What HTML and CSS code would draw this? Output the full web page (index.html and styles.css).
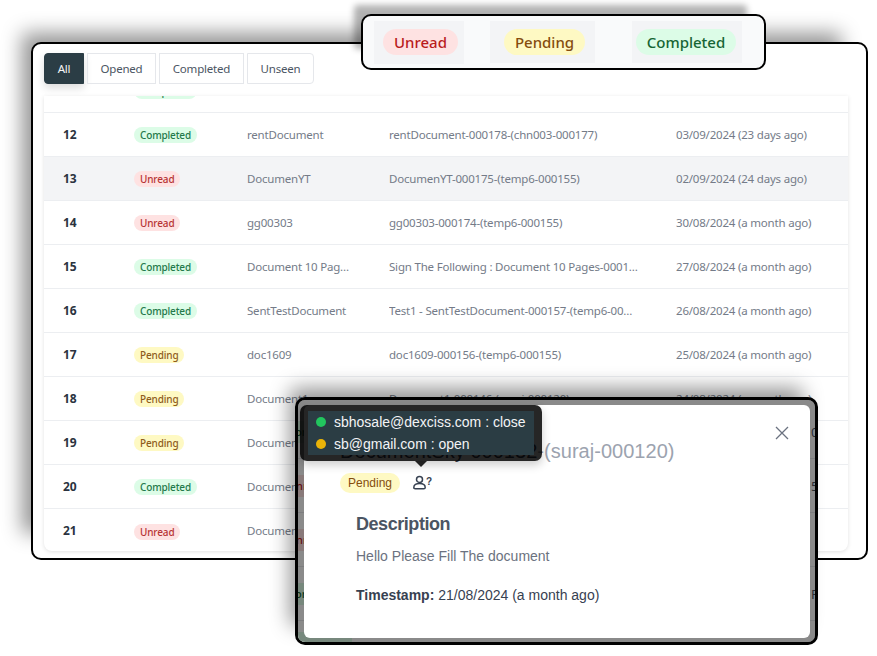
FILE: index.html
```html
<!DOCTYPE html>
<html lang="en">
<head>
<meta charset="utf-8">
<title>Documents</title>
<link rel="stylesheet" href="styles.css">
</head>
<body>
<div class="desktop">
  <section class="window main-window">
    <nav class="tabs">
      <span class="tab tab-active">All</span>
      <span class="tab">Opened</span>
      <span class="tab">Completed</span>
      <span class="tab tab-last">Unseen</span>
    </nav>
    <div class="table">
      <div class="rows">
        <div class="row"><b class="num">11</b><span class="status"><i class="badge completed">Completed</i></span><span class="cell"></span><span class="cell"></span><span class="cell"></span></div>
        <div class="row"><b class="num">12</b><span class="status"><i class="badge completed">Completed</i></span><span class="cell name">rentDocument</span><span class="cell doc">rentDocument-000178-(chn003-000177)</span><span class="cell">03/09/2024 (23 days ago)</span></div>
        <div class="row row-hover"><b class="num">13</b><span class="status"><i class="badge unread">Unread</i></span><span class="cell name">DocumenYT</span><span class="cell doc">DocumenYT-000175-(temp6-000155)</span><span class="cell">02/09/2024 (24 days ago)</span></div>
        <div class="row"><b class="num">14</b><span class="status"><i class="badge unread">Unread</i></span><span class="cell name">gg00303</span><span class="cell doc">gg00303-000174-(temp6-000155)</span><span class="cell">30/08/2024 (a month ago)</span></div>
        <div class="row"><b class="num">15</b><span class="status"><i class="badge completed">Completed</i></span><span class="cell name">Document 10 Pages</span><span class="cell doc">Sign The Following : Document 10 Pages-000170-(temp6-000155)</span><span class="cell">27/08/2024 (a month ago)</span></div>
        <div class="row"><b class="num">16</b><span class="status"><i class="badge completed">Completed</i></span><span class="cell name">SentTestDocument</span><span class="cell doc">Test1 - SentTestDocument-000157-(temp6-000155)</span><span class="cell">26/08/2024 (a month ago)</span></div>
        <div class="row"><b class="num">17</b><span class="status"><i class="badge pending">Pending</i></span><span class="cell name">doc1609</span><span class="cell doc">doc1609-000156-(temp6-000155)</span><span class="cell">25/08/2024 (a month ago)</span></div>
        <div class="row"><b class="num">18</b><span class="status"><i class="badge pending">Pending</i></span><span class="cell name">Document1</span><span class="cell doc">Document1-000146-(suraj-000120)</span><span class="cell">24/08/2024 (a month ago)</span></div>
        <div class="row"><b class="num">19</b><span class="status"><i class="badge pending">Pending</i></span><span class="cell name">Document1</span><span class="cell doc"></span><span class="cell"></span></div>
        <div class="row"><b class="num">20</b><span class="status"><i class="badge completed">Completed</i></span><span class="cell name">Document1</span><span class="cell doc"></span><span class="cell"></span></div>
        <div class="row"><b class="num">21</b><span class="status"><i class="badge unread">Unread</i></span><span class="cell name">Document1</span><span class="cell doc"></span><span class="cell"></span></div>
      </div>
    </div>
  </section>

  <section class="window legend">
    <div class="swatch swatch-unread"><i class="pill unread">Unread</i></div>
    <div class="swatch swatch-pending"><i class="pill pending">Pending</i></div>
    <div class="swatch swatch-completed"><i class="pill completed">Completed</i></div>
  </section>

  <section class="window modal-window">
    <div class="under-rows">
      <div class="under-row"><span class="under-badge completed">Completed</span><span class="under-date">0</span></div>
      <div class="under-row"><span class="under-badge unread">Unread</span><span class="under-date">5</span></div>
      <div class="under-row"><span class="under-badge unread">Unread</span></div>
      <div class="under-row"><span class="under-badge completed">Completed</span><span class="under-date">P</span></div>
      <div class="under-row"><span class="under-badge completed"></span></div>
    </div>
    <div class="scrim"></div>
    <div class="dialog">
      <svg class="close" viewBox="0 0 14 14" width="14" height="14" aria-hidden="true"><path d="M1 1l12 12M13 1L1 13"/></svg>
      <h2 class="title">DocumentSky 000132<span class="title-rest">-(suraj-000120)</span></h2>
      <div class="status-line">
        <span class="status-pill">Pending</span>
        <svg class="person" viewBox="0 0 18 14" width="18" height="14" aria-hidden="true">
          <circle cx="6.500" cy="3.400" r="3"/>
          <path d="M0.800 11.400c0-2.600 2.500-3.900 5.700-3.900s5.700 1.300 5.700 3.900c0 1-.6 1.300-1.400 1.300H2.200c-.8 0-1.400-.3-1.400-1.300z"/>
          <text x="13" y="9">?</text>
        </svg>
      </div>
      <h3 class="desc-title">Description</h3>
      <p class="desc">Hello Please Fill The document</p>
      <p class="stamp"><b>Timestamp:</b> 21/08/2024 (a month ago)</p>
    </div>
    <div class="tooltip">
      <div class="tip-body">
        <div class="tip-line"><i class="dot dot-green"></i>sbhosale@dexciss.com : close</div>
        <div class="tip-line"><i class="dot dot-yellow"></i>sb@gmail.com : open</div>
      </div>
    </div>
  </section>
</div>
</body>
</html>
```

FILE: styles.css
```css
* { box-sizing: border-box; }
html, body { margin: 0; padding: 0; background: #fff; }
body { width: 877px; height: 656px; overflow: hidden; }
i { font-style: normal; }

.desktop {
  position: relative;
  width: 877px;
  height: 656px;
  font-family: "Noto Sans", sans-serif;
}
.window {
  position: absolute;
  background: #fff;
  border: 2px solid #000;
  border-radius: 10px;
}

/* main window */
.main-window {
  left: 31px;
  top: 42px;
  width: 837px;
  height: 518px;
  padding: 9px 18px 0 11px;
  box-shadow: -18px -18px 20px -9px rgba(0, 0, 0, .42);
}
.tabs { display: flex; gap: 3px; height: 31px; }
.tab {
  display: flex;
  align-items: center;
  justify-content: center;
  width: 69px;
  font-size: 11.500px;
  letter-spacing: -.2px;
  color: #4b5563;
  border: 1px solid #e5e7eb;
}
.tab:nth-child(3) { width: 85px; }
.tab-last { width: 67px; border-radius: 0 4px 4px 0; }
.tab-active {
  width: 40px;
  color: #f3f4f6;
  background: #2b3d45;
  border-color: #2b3d45;
  border-radius: 4px 0 0 4px;
  box-shadow: 0 4px 8px rgba(0, 0, 0, .14);
}
.table {
  height: 455px;
  margin-top: 12px;
  overflow: hidden;
  background: #fff;
  border-radius: 0 0 8px 8px;
  box-shadow: 0 1px 4px rgba(0, 0, 0, .12);
}
.rows { margin-top: -27px; }
.row {
  display: grid;
  grid-template-columns: 70px 113px 142px 287px 1fr;
  align-items: center;
  height: 44px;
  padding: 0 0 1px 20px;
  border-bottom: 1px solid #eceef1;
  font-size: 11.500px;
  letter-spacing: -.2px;
  color: #747b88;
}
.row:last-child { border-bottom: 0; }
.row-hover { background: #f3f4f6; }
.num { margin-left: -1px; font-size: 12px; letter-spacing: 0; font-weight: 700; color: #2b3340; }
.status { padding-top: 2px; }
.cell { overflow: hidden; white-space: nowrap; text-overflow: ellipsis; }
.name { padding-right: 38px; }
.doc { padding-right: 38px; }

.badge {
  display: inline-block;
  padding: 0 6px;
  height: 16px;
  line-height: 16px;
  border-radius: 8px;
  font-size: 10px;
  letter-spacing: -.15px;
  font-weight: 500;
  white-space: nowrap;
}
.unread { background: #fee2e2; color: #b91c1c; }
.pending { background: #fef9c3; color: #854d0e; }
.completed { background: #dcfce7; color: #166534; }
.badge.completed { color: #23794a; }
.badge.unread { color: #b73434; }
.badge.pending { color: #8f5c1c; }

/* legend */
.legend {
  left: 361px;
  top: 14px;
  width: 405px;
  height: 56px;
  padding: 5px 0 0 11px;
  display: grid;
  grid-template-columns: 116px 142px 110px;
  align-items: start;
  background: #f9fafb;
  box-shadow: -13px -15px 6px -6px rgba(0, 0, 0, .3);
}
.swatch { background: #f3f4f6; height: 42px; padding-top: 8px; }
.swatch-unread { width: 90px; height: 43px; padding-left: 9px; }
.swatch-pending { width: 105px; padding-left: 14px; }
.swatch-completed { padding-left: 4px; }
.pill {
  display: block;
  height: 26px;
  line-height: 26px;
  text-align: center;
  border-radius: 13px;
  font-size: 15px;
  font-weight: 500;
}
.swatch-unread .pill { width: 75px; }
.swatch-pending .pill { width: 81px; }
.swatch-completed .pill { width: 100px; }

/* modal */
.modal-window {
  left: 295px;
  top: 397px;
  width: 523px;
  height: 248px;
  border-width: 3px;
  overflow: visible;
  background: #fff;
  box-shadow: -10px -14px 20px -5px rgba(0, 0, 0, .42);
}
.under-rows {
  position: absolute;
  inset: 0;
  overflow: hidden;
  padding-top: 5px;
  border-radius: 7px;
  font-size: 13px;
  color: #4b5563;
}
.under-row {
  display: flex;
  align-items: center;
  height: 54px;
  border-bottom: 1px solid #e5e7eb;
}
.under-badge {
  flex: 0 0 auto;
  width: 70px;
  height: 22px;
  line-height: 22px;
  margin: 0 459px 0 -16px;
  padding-left: 6px;
  font-size: 11px;
  font-weight: 500;
  white-space: nowrap;
  overflow: hidden;
}
.under-row:last-child { align-items: flex-start; padding-top: 11px; }
.scrim {
  position: absolute;
  inset: 0;
  border-radius: 7px;
  background: rgba(0, 0, 0, .46);
}
.dialog {
  position: absolute;
  left: 6px;
  top: 5px;
  width: 506px;
  height: 233px;
  padding: 34px 0 0 36px;
  background: #fff;
  border-radius: 6px;
  font-family: "Liberation Sans", Arial, sans-serif;
}
.close {
  position: absolute;
  right: 21px;
  top: 21px;
  fill: none;
  stroke: #6b7280;
  stroke-width: 1.300;
}
.title {
  margin: 0;
  font-size: 20px;
  line-height: 24px;
  font-weight: 400;
  letter-spacing: .03px;
  white-space: nowrap;
  color: #374151;
}
.title-rest { color: #9ca3af; }
.status-line { display: flex; align-items: center; gap: 13px; margin-top: 10px; height: 20px; }
.status-pill {
  display: block;
  width: 60px;
  height: 20px;
  line-height: 20px;
  text-align: center;
  border-radius: 10px;
  font-size: 12px;
  background: #fef9c3;
  color: #854d0e;
}
.person { fill: none; stroke: #374151; stroke-width: 1.500; overflow: visible; }
.person text {
  font-family: "Liberation Sans", Arial, sans-serif;
  font-size: 10px;
  font-weight: 700;
  fill: #374151;
  stroke: none;
}
.desc-title {
  margin: 20px 0 0 16px;
  font-size: 18px;
  line-height: 22px;
  font-weight: 700;
  letter-spacing: -.45px;
  color: #4b5563;
}
.desc { margin: 11px 0 0 16px; font-size: 14px; line-height: 20px; color: #6b7280; }
.stamp { margin: 19px 0 0 16px; font-size: 14px; line-height: 20px; color: #374151; }

.tooltip {
  position: absolute;
  left: 2px;
  top: 5px;
  width: 242px;
  height: 56px;
  padding: 6px 8px;
  background: rgba(0, 0, 0, .85);
  border-radius: 7px;
  box-shadow: 0 4px 10px rgba(0, 0, 0, .2);
  font-family: "Liberation Sans", Arial, sans-serif;
}
.tooltip::after {
  content: "";
  position: absolute;
  left: 115px;
  bottom: -6px;
  border: 6px solid transparent;
  border-bottom-width: 0;
  border-top-color: rgba(0, 0, 0, .85);
}
.tip-body { height: 44px; padding-left: 8px; background: #2b3d44; color: #f3f4f6; }
.tip-line { display: flex; align-items: center; gap: 8px; height: 22px; font-size: 14px; white-space: nowrap; }
.dot { width: 10px; height: 10px; border-radius: 50%; }
.dot-green { background: #22c55e; }
.dot-yellow { background: #eab308; }
```
